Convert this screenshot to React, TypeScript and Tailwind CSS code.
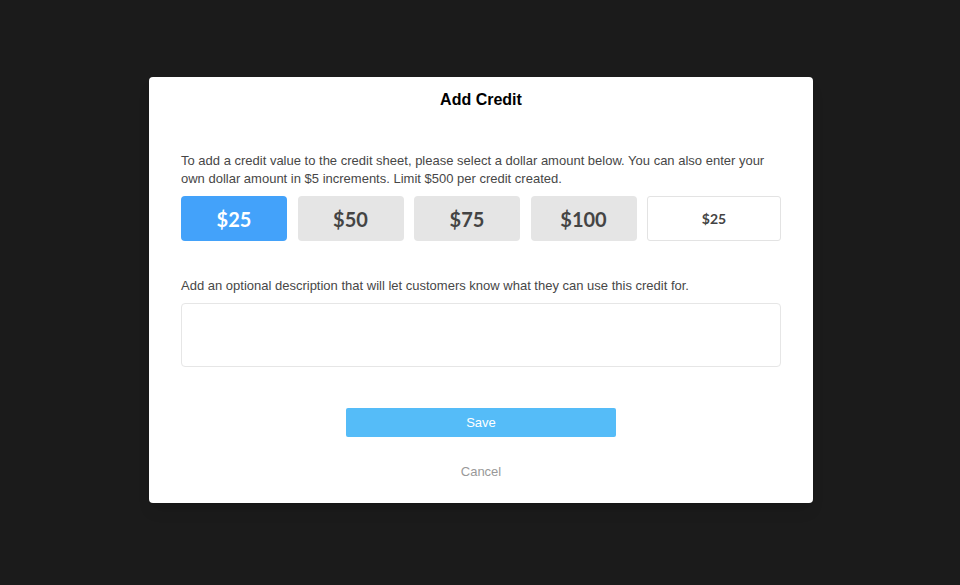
import { useState } from 'react'

const presets = [25, 50, 75, 100]

export default function App() {
  const [amount, setAmount] = useState(25)
  const [custom, setCustom] = useState('$25')
  const [description, setDescription] = useState('')

  return (
    <div className="min-h-screen w-full bg-[#1b1b1b] flex items-start justify-center pt-[77px] pl-[2px] font-['Liberation_Sans',Arial,sans-serif]">
      <div className="w-[664px] bg-white rounded-[4px] shadow-lg px-[32px] pb-[22px]">
        {/* Header */}
        <div className="h-[46px] flex items-center justify-center">
          <h1 className="text-[16px] font-bold text-black">Add Credit</h1>
        </div>

        <p className="mt-[29px] text-[13px] leading-[18px] text-[#474747]">
          To add a credit value to the credit sheet, please select a dollar amount below. You can also enter your
          own dollar amount in $5 increments. Limit $500 per credit created.
        </p>

        {/* Amount options */}
        <div className="mt-[8px] flex justify-between">
          {presets.map((value) => (
            <button
              key={value}
              onClick={() => setAmount(value)}
              className={`w-[106px] h-[45px] rounded-[4px] text-[20px] font-bold font-['Lato',sans-serif] ${
                amount === value ? 'bg-[#43a2fa] text-white' : 'bg-[#e5e5e5] text-[#444]'
              }`}
            >
              ${value}
            </button>
          ))}
          <input
            value={custom}
            onChange={(e) => setCustom(e.target.value)}
            className="w-[134px] h-[45px] rounded-[3px] border border-[#e3e3e3] text-center text-[14px] font-bold font-['Lato',sans-serif] text-[#444] outline-none"
          />
        </div>

        <p className="mt-[36px] text-[13px] leading-[18px] text-[#474747]">
          Add an optional description that will let customers know what they can use this credit for.
        </p>
        <textarea
          value={description}
          onChange={(e) => setDescription(e.target.value)}
          className="mt-[8px] block w-full h-[64px] rounded-[4px] border border-[#e6e6e6] resize-none outline-none p-2 text-[13px]"
        />

        {/* Actions */}
        <div className="mt-[41px] flex justify-center">
          <button className="w-[270px] h-[29px] rounded-[2px] bg-[#55bcf8] text-white text-[13px]">Save</button>
        </div>
        <div className="mt-[26px] flex justify-center">
          <button className="text-[13px] leading-[18px] text-[#999]">Cancel</button>
        </div>
      </div>
    </div>
  )
}
